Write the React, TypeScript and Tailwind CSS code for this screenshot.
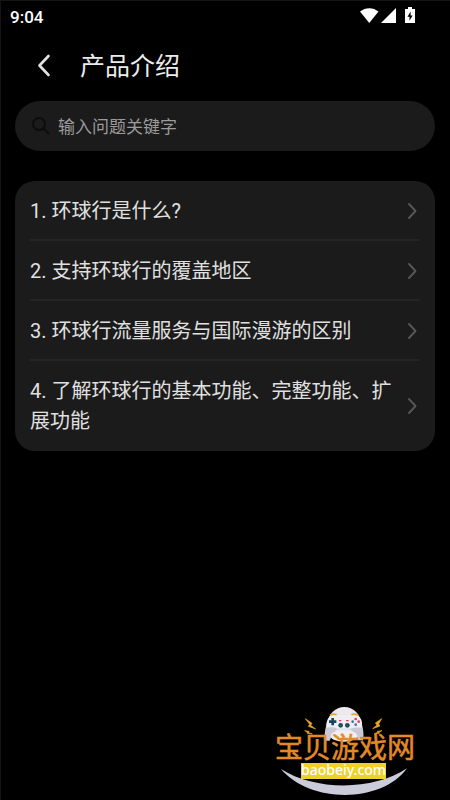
import React from "react";

const questions = [
  "1. 环球行是什么?",
  "2. 支持环球行的覆盖地区",
  "3. 环球行流量服务与国际漫游的区别",
  "4. 了解环球行的基本功能、完整功能、扩展功能",
];

function StatusBar() {
  return (
    <div className="flex h-8 items-center justify-between pr-[35px] pl-[10px]">
      <span className="text-[17px] leading-5 font-medium text-white">9:04</span>
      <svg className="overflow-visible" width="56" height="18" viewBox="0 0 56 18" fill="#fff" aria-hidden="true">
        <path d="M1 3.500C6.500-1 14-1 19.500 3.500L10.250 15Z" />
        <path d="M37 0V15H22Z" />
        <path d="M46 1h3V-1h4v2h3v14H46ZM51.600 3.500 48.500 8.700h2v4l3.100-5.200h-2Z" fillRule="evenodd" />
      </svg>
    </div>
  );
}

function Chevron() {
  return (
    <svg className="shrink-0" width="16" height="20" viewBox="0 0 16 20" fill="none" stroke="#575757" strokeWidth="1.900" strokeLinecap="round" strokeLinejoin="round" aria-hidden="true">
      <path d="M5 3 11.500 10 5 17" />
    </svg>
  );
}

function Bolt({ d }: { d: string }) {
  return <path d={d} fill="#e8a827" stroke="#e8a827" strokeWidth="2" />;
}

function SiteLogo() {
  return (
    <div className="absolute right-[25px] bottom-0 h-[105px] w-[160px]">
      <svg className="absolute inset-0" width="160" height="105" viewBox="0 0 480 315" aria-hidden="true">
        <path d="M48 222C150 288 325 288 426 220C350 326 135 326 48 222Z" fill="#cbccda" />
        <ellipse cx="238" cy="84" rx="49" ry="48" fill="#eceaf0" />
        <path d="M195 64C220 56 255 56 281 64C292 82 299 115 294 136H280C274 120 265 108 254 103H219C208 108 200 124 194 137H180C176 115 184 82 195 64Z" fill="#c9cad6" />
        <path d="M197 62C222 56 254 56 279 62C291 71 294 86 289 98C275 96 265 98 257 101H218C207 97 198 96 185 98C182 83 188 68 197 62Z" fill="#f0eef3" />
        <ellipse cx="237" cy="123" rx="40" ry="17" fill="#f2eef2" />
        <path d="M195 61q10-6 20-2M259 59q10-4 20 2" stroke="#e8a827" strokeWidth="5" fill="none" />
        <path d="M199 69h8v7h7v8h-7v7h-8v-7h-7v-8h7Z" fill="#16485a" />
        <circle cx="227" cy="91" r="7" fill="#16485a" />
        <circle cx="247" cy="91" r="7" fill="#16485a" />
        <circle cx="227" cy="91" r="2" fill="#b5485b" />
        <circle cx="247" cy="91" r="2" fill="#b5485b" />
        <path d="M222 77h7M243 77h8" stroke="#d8435a" strokeWidth="4" />
        <circle cx="272" cy="72" r="4" fill="#d8435a" />
        <circle cx="272" cy="89" r="4" fill="#3678a5" />
        <circle cx="263" cy="80" r="4" fill="#3678a5" />
        <circle cx="281" cy="80" r="4" fill="#d8435a" />
        <Bolt d="M121 71 141 85 137 91 152 102 130 94 134 88Z" />
        <Bolt d="M350 71 331 84 336 90 323 101 345 93 341 87Z" />
        <Bolt d="M119 107 132 109 131 113 142 117 126 115 127 111Z" />
        <Bolt d="M351 107 337 109 338 112 328 116 343 115 342 111Z" />
      </svg>
      <div className="relative flex flex-col pt-10">
        <span className="text-center text-[28px] leading-7 font-normal text-[#e38a25] [-webkit-text-stroke:0.5px_#e38a25]">宝贝游戏网</span>
        <span className="ml-9 h-4 w-[85px] bg-[#efd12d] text-center font-['Noto_Sans',sans-serif] text-[14px] leading-[14px] font-medium text-white">baobeiy.com</span>
      </div>
    </div>
  );
}

export default function App() {
  return (
    <div className="relative min-h-screen border-t border-[#141414] bg-black font-[Roboto,'Noto_Sans_CJK_SC',sans-serif] shadow-[inset_1px_0_0_#141414]">
      <StatusBar />
      <header className="flex h-[68px] items-center gap-5 pl-7">
        <button type="button" aria-label="返回" className="flex w-8 justify-center">
          <svg width="32" height="28" viewBox="0 0 32 28" fill="none" stroke="#e2e2e2" strokeWidth="2.600" strokeLinecap="round" strokeLinejoin="round" aria-hidden="true">
            <path d="M20.500 3 11.500 12.500 20.500 22" />
          </svg>
        </button>
        <h1 className="text-[25px] leading-8 text-[#ececec]">产品介绍</h1>
      </header>
      <main className="px-[15px]">
        <label className="flex h-[50px] items-center gap-2 rounded-full bg-[#1b1b1b] pr-4 pl-4">
          <svg className="shrink-0" width="19" height="19" viewBox="0 0 19 19" fill="none" stroke="#0d0d0d" strokeWidth="2" strokeLinecap="round" aria-hidden="true">
            <circle cx="8" cy="7" r="6" />
            <path d="m12.500 11.500 5 5" />
          </svg>
          <input type="text" aria-label="输入问题关键字" placeholder="输入问题关键字" className="min-w-0 flex-1 bg-transparent pt-0.5 text-[17px] leading-6 text-white outline-none placeholder:text-[#9b9b9b]" />
        </label>
        <ul className="mt-[30px] rounded-[20px] bg-[#1b1b1b] px-[15px] pb-0.5">
          {questions.map((q) => (
            <li key={q} className="border-b-2 border-[#242424] last:border-b-0">
              <button type="button" className="flex w-full items-center justify-between gap-2 pt-[15px] pb-[13px] text-left text-[20px] leading-[30px] text-[#e0e0e0]">
                <span>{q}</span>
                <Chevron />
              </button>
            </li>
          ))}
        </ul>
      </main>
      <SiteLogo />
    </div>
  );
}
